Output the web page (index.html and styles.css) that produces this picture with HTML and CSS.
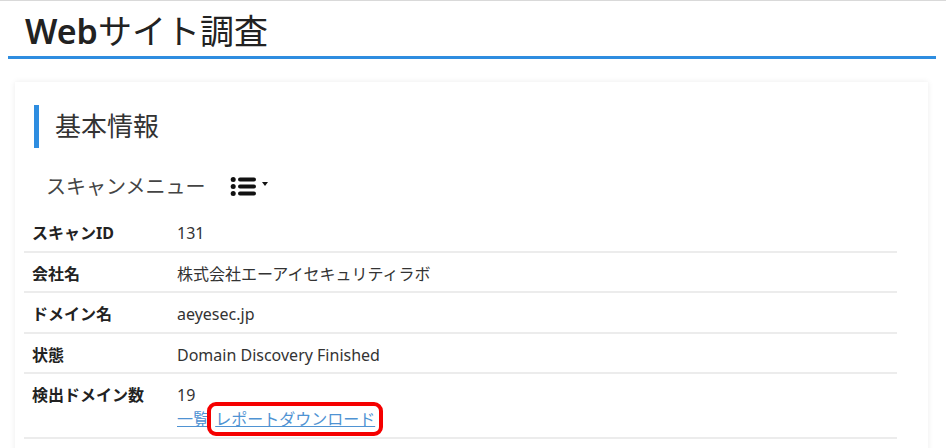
FILE: index.html
```html
<!DOCTYPE html>
<html lang="ja">
  <head>
    <meta charset="utf-8" />
    <meta name="viewport" content="width=device-width, initial-scale=1" />
    <title>Webサイト調査</title>
    <link rel="stylesheet" href="styles.css">
  </head>
  <body>
    <div class="page">
      <h1 class="page-title"><span class="latin">Web</span>サイト調査</h1>
      <div class="card">
        <h2 class="section-title">基本情報</h2>
        <div class="scan-menu">
          <span class="scan-menu-label">スキャンメニュー</span>
          <span class="menu-toggle">
            <svg width="26" height="19" viewBox="0 0 26 19">
              <circle cx="3.2" cy="2.5" r="2.5" fill="#111" />
              <circle cx="3.2" cy="9.5" r="2.5" fill="#111" />
              <circle cx="3.2" cy="16.5" r="2.5" fill="#111" />
              <line x1="10" y1="2.5" x2="24" y2="2.5" stroke="#111" stroke-width="4" stroke-linecap="round" />
              <line x1="10" y1="9.5" x2="24" y2="9.5" stroke="#111" stroke-width="4" stroke-linecap="round" />
              <line x1="10" y1="16.5" x2="24" y2="16.5" stroke="#111" stroke-width="4" stroke-linecap="round" />
            </svg>
            <span class="caret"></span>
          </span>
        </div>
        <table class="info-table">
          <tr>
            <th>スキャンID</th>
            <td>131</td>
          </tr>
          <tr>
            <th>会社名</th>
            <td>株式会社エーアイセキュリティラボ</td>
          </tr>
          <tr>
            <th>ドメイン名</th>
            <td>aeyesec.jp</td>
          </tr>
          <tr>
            <th>状態</th>
            <td>Domain Discovery Finished</td>
          </tr>
          <tr>
            <th>検出ドメイン数</th>
            <td>
              19<br />
              <a href="#">一覧</a> <a href="#" class="report-link">レポートダウンロード</a>
            </td>
          </tr>
        </table>
      </div>
    </div>
  </body>
</html>
```

FILE: styles.css
```css
body {
  margin: 0;
  background: #fff;
  font-family: "Noto Sans", "Noto Sans CJK JP", sans-serif;
  color: #333;
  overflow: hidden;
}
.page {
  border-top: 1px solid #d9d9d9;
  height: 447px;
}
.page-title {
  margin: 9px 10px 0 8px;
  padding: 0 0 4px 17px;
  font-size: 34px;
  line-height: 42px;
  font-weight: 400;
  color: #222;
  border-bottom: 3px solid #2e8de0;
}
.page-title .latin {
  font-weight: 600;
}
.card {
  margin: 23px 18px 0 15px;
  padding: 23px 31px 40px 9px;
  background: #fff;
  box-shadow: 0 0 6px rgba(0, 0, 0, 0.08);
}
.section-title {
  margin: 0 0 0 10px;
  padding-left: 16px;
  border-left: 5px solid #2e8de0;
  font-size: 26px;
  line-height: 43px;
  font-weight: 400;
  color: #333;
}
.scan-menu {
  display: flex;
  align-items: center;
  margin: 16px 0 6px 22px;
  height: 42px;
}
.scan-menu-label {
  font-size: 20px;
  color: #444;
}
.menu-toggle {
  display: flex;
  align-items: center;
  margin-left: 25px;
  padding-top: 2px;
}
.caret {
  width: 0;
  height: 0;
  margin-left: 6px;
  margin-bottom: 5px;
  border-left: 3px solid transparent;
  border-right: 3px solid transparent;
  border-top: 4px solid #111;
}
.info-table {
  width: 100%;
  border-collapse: collapse;
  font-size: 16px;
  line-height: 24px;
}
.info-table th,
.info-table td {
  padding: 9px 8px 5.5px;
  border-bottom: 2px solid #ececec;
  text-align: left;
  vertical-align: top;
}
.info-table th {
  width: 129px;
  font-weight: 700;
  color: #222;
}
.info-table td {
  color: #333;
}
.info-table a {
  color: #4f93d3;
  text-decoration: underline;
}
.report-link {
  border-radius: 3px;
  outline: 4px solid #f50000;
  outline-offset: 2px;
  padding: 0 2px;
}
```
